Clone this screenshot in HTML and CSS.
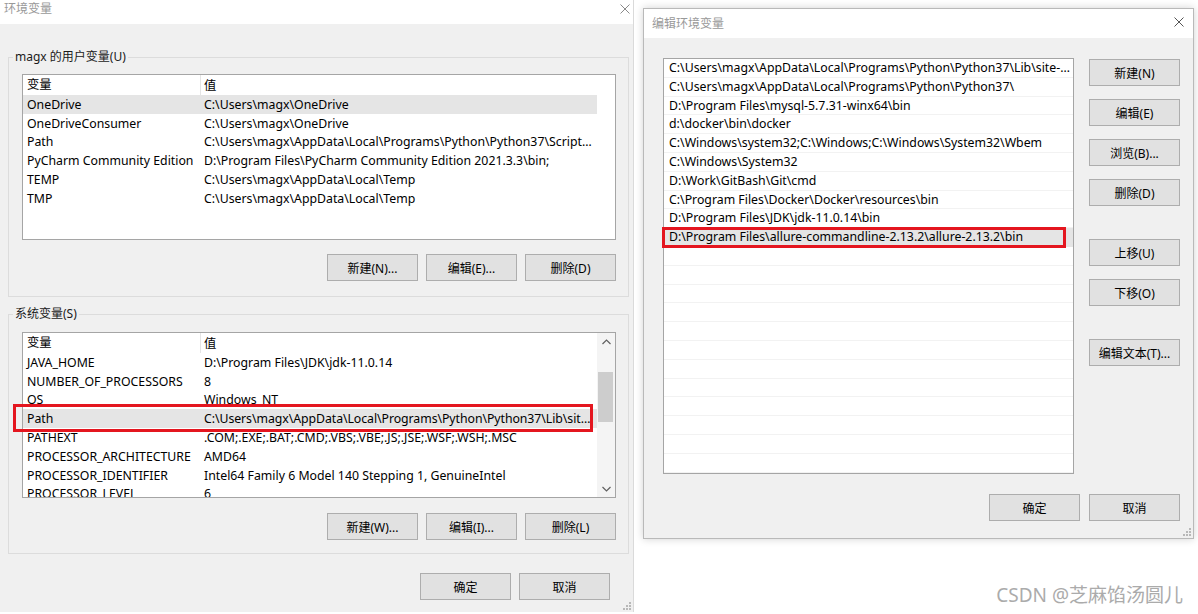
FILE: index.html
```html
<!DOCTYPE html>
<html lang="zh-CN">
<head>
<meta charset="utf-8">
<title>环境变量</title>
<link rel="stylesheet" href="styles.css">
</head>
<body>
<div class="screen">
  <section class="dlg env">
    <header class="titlebar">
      <span class="title">环境变量</span>
      <svg class="close" width="10" height="10" viewBox="0 0 10 10"><path d="M0.5 0.5 L9.5 9.5 M9.5 0.5 L0.5 9.5" stroke="#8a8a8a" stroke-width="1" fill="none"/></svg>
    </header>

    <fieldset class="group user">
      <legend>magx 的用户变量(U)</legend>
      <div class="lv-wrap">
        <div class="listview">
          <div class="lv-main">
            <div class="lv-head"><span class="c1">变量</span><span class="c2">值</span></div>
            <div class="lv-row sel"><span class="c1">OneDrive</span><span class="c2">C:\Users\magx\OneDrive</span></div>
            <div class="lv-row"><span class="c1">OneDriveConsumer</span><span class="c2">C:\Users\magx\OneDrive</span></div>
            <div class="lv-row"><span class="c1">Path</span><span class="c2">C:\Users\magx\AppData\Local\Programs\Python\Python37\Script…</span></div>
            <div class="lv-row"><span class="c1">PyCharm Community Edition</span><span class="c2">D:\Program Files\PyCharm Community Edition 2021.3.3\bin;</span></div>
            <div class="lv-row"><span class="c1">TEMP</span><span class="c2">C:\Users\magx\AppData\Local\Temp</span></div>
            <div class="lv-row"><span class="c1">TMP</span><span class="c2">C:\Users\magx\AppData\Local\Temp</span></div>
          </div>
        </div>
      </div>
      <div class="btnrow">
        <button class="btn">新建(N)...</button>
        <button class="btn">编辑(E)...</button>
        <button class="btn">删除(D)</button>
      </div>
    </fieldset>

    <fieldset class="group sys">
      <legend>系统变量(S)</legend>
      <div class="lv-wrap">
        <div class="listview">
          <div class="lv-main">
            <div class="lv-head"><span class="c1">变量</span><span class="c2">值</span></div>
            <div class="lv-row"><span class="c1">JAVA_HOME</span><span class="c2">D:\Program Files\JDK\jdk-11.0.14</span></div>
            <div class="lv-row"><span class="c1">NUMBER_OF_PROCESSORS</span><span class="c2">8</span></div>
            <div class="lv-row"><span class="c1">OS</span><span class="c2">Windows_NT</span></div>
            <div class="lv-row sel"><span class="c1">Path</span><span class="c2 tight">C:\Users\magx\AppData\Local\Programs\Python\Python37\Lib\sit…</span></div>
            <div class="lv-row"><span class="c1">PATHEXT</span><span class="c2">.COM;.EXE;.BAT;.CMD;.VBS;.VBE;.JS;.JSE;.WSF;.WSH;.MSC</span></div>
            <div class="lv-row"><span class="c1">PROCESSOR_ARCHITECTURE</span><span class="c2">AMD64</span></div>
            <div class="lv-row"><span class="c1">PROCESSOR_IDENTIFIER</span><span class="c2">Intel64 Family 6 Model 140 Stepping 1, GenuineIntel</span></div>
            <div class="lv-row"><span class="c1">PROCESSOR_LEVEL</span><span class="c2">6</span></div>
          </div>
          <div class="scrollbar">
            <div class="sb-arrow"><svg width="9" height="6" viewBox="0 0 9 6"><path d="M0.5 5 L4.5 1 L8.5 5" stroke="#606060" stroke-width="1.2" fill="none"/></svg></div>
            <div class="sb-thumb"></div>
            <div class="sb-arrow down"><svg width="9" height="6" viewBox="0 0 9 6"><path d="M0.5 1 L4.5 5 L8.5 1" stroke="#606060" stroke-width="1.2" fill="none"/></svg></div>
          </div>
        </div>
        <div class="redbox sys-mark"></div>
      </div>
      <div class="btnrow">
        <button class="btn">新建(W)...</button>
        <button class="btn">编辑(I)...</button>
        <button class="btn">删除(L)</button>
      </div>
    </fieldset>

    <div class="btnrow footer">
      <button class="btn">确定</button>
      <button class="btn">取消</button>
    </div>
    <svg class="grip" width="8" height="8" viewBox="0 0 8 8"><g fill="#b8b8b8"><rect x="6" y="0" width="2" height="2"/><rect x="3" y="3" width="2" height="2"/><rect x="6" y="3" width="2" height="2"/><rect x="0" y="6" width="2" height="2"/><rect x="3" y="6" width="2" height="2"/><rect x="6" y="6" width="2" height="2"/></g></svg>
  </section>

  <div class="right-col">
    <section class="dlg edit">
      <header class="titlebar">
        <span class="title">编辑环境变量</span>
        <svg class="close" width="10" height="10" viewBox="0 0 10 10"><path d="M0.5 0.5 L9.5 9.5 M9.5 0.5 L0.5 9.5" stroke="#555" stroke-width="1" fill="none"/></svg>
      </header>
      <div class="edit-body">
        <div class="edit-main">
          <div class="lv-wrap">
            <div class="pathlist">
              <div class="p-row">C:\Users\magx\AppData\Local\Programs\Python\Python37\Lib\site-…</div>
              <div class="p-row">C:\Users\magx\AppData\Local\Programs\Python\Python37\</div>
              <div class="p-row">D:\Program Files\mysql-5.7.31-winx64\bin</div>
              <div class="p-row">d:\docker\bin\docker</div>
              <div class="p-row">C:\Windows\system32;C:\Windows;C:\Windows\System32\Wbem</div>
              <div class="p-row">C:\Windows\System32</div>
              <div class="p-row">D:\Work\GitBash\Git\cmd</div>
              <div class="p-row">C:\Program Files\Docker\Docker\resources\bin</div>
              <div class="p-row">D:\Program Files\JDK\jdk-11.0.14\bin</div>
              <div class="p-row sel">D:\Program Files\allure-commandline-2.13.2\allure-2.13.2\bin</div>
            </div>
            <div class="redbox edit-mark"></div>
          </div>
          <div class="side-btns">
            <button class="btn">新建(N)</button>
            <button class="btn">编辑(E)</button>
            <button class="btn">浏览(B)...</button>
            <button class="btn">删除(D)</button>
            <button class="btn sep">上移(U)</button>
            <button class="btn">下移(O)</button>
            <button class="btn sep">编辑文本(T)...</button>
          </div>
        </div>
        <div class="btnrow footer">
          <button class="btn">确定</button>
          <button class="btn">取消</button>
        </div>
      </div>
      <svg class="grip" width="8" height="8" viewBox="0 0 8 8"><g fill="#b8b8b8"><rect x="6" y="0" width="2" height="2"/><rect x="3" y="3" width="2" height="2"/><rect x="6" y="3" width="2" height="2"/><rect x="0" y="6" width="2" height="2"/><rect x="3" y="6" width="2" height="2"/><rect x="6" y="6" width="2" height="2"/></g></svg>
    </section>
    <div class="watermark">CSDN @芝麻馅汤圆儿</div>
  </div>
</div>
</body>
</html>
```

FILE: styles.css
```css
* { box-sizing: border-box; }
html, body { margin: 0; padding: 0; }
body {
  background: #fff;
  font-family: "Noto Sans", "Noto Sans CJK SC", sans-serif;
  font-size: 12px;
  color: #000;
}
.screen {
  display: flex;
  align-items: flex-start;
  width: 1198px;
  height: 614px;
  overflow: hidden;
}
.dlg { position: relative; background: #f0f0f0; flex: none; }

/* title bars */
.titlebar {
  display: flex;
  justify-content: space-between;
  align-items: flex-start;
  background: #fff;
}
.title { font-size: 12px; line-height: 16px; color: #999; }
.close { display: block; flex: none; }

/* left dialog */
.env {
  width: 634px;
  height: 612px;
  border-right: 1px solid #dadada;
}
.env .titlebar { height: 24px; padding: 1px 0 0 4px; }
.env .close { margin: 3px 3px 0 0; }

.group {
  margin: 0 0 0 8px;
  width: 621px;
  min-width: 0;
  border: 1px solid #dcdcdc;
  padding: 9px 12px 14px 13px;
}
.group legend {
  padding: 0 2px;
  margin-left: -9px;
  line-height: 16px;
  font-size: 12px;
  color: #1a1a1a;
}
.group.user { margin-top: 25px; padding-bottom: 15px; }
.group.sys { margin-top: 9px; padding-top: 10px; padding-bottom: 13px; }

.lv-wrap { position: relative; }
.listview {
  width: 594px;
  height: 166px;
  border: 1px solid #a5a5a5;
  background: #fff;
  display: flex;
  overflow: hidden;
  font-size: 12.3px;
}
.lv-main { width: 574px; flex: none; }
.lv-head, .lv-row { display: flex; white-space: nowrap; }
.lv-head { height: 20px; align-items: center; }
.lv-head .c1 { width: 178px; border-right: 1px solid #e5e5e5; line-height: 20px; }
.lv-head .c2 { padding-left: 3px; }
.c1 { width: 177px; flex: none; padding-left: 4px; overflow: hidden; }
.c2 { flex: 1; padding-left: 4px; overflow: hidden; }
.c2.tight { letter-spacing: -0.06px; }
.lv-row { height: 18.8px; align-items: center; line-height: 16px; padding-top: 1px; }
.lv-row.sel { background: #e5e5e5; }

.scrollbar {
  flex: 1;
  display: flex;
  flex-direction: column;
  background: #f4f4f4;
}
.sb-arrow { height: 17px; display: flex; align-items: center; justify-content: center; }
.sb-arrow svg { display: block; }
.sb-arrow.down { margin-top: auto; }
.sb-thumb { margin: 22px 2px 0 1px; height: 50px; background: #cdcdcd; }

.redbox { position: absolute; border: 3px solid #e4161f; }
.sys-mark { left: -9px; top: 72px; width: 580px; height: 28px; }

.btnrow { display: flex; justify-content: flex-end; gap: 8px; margin-top: 14px; }
.group.sys .btnrow { margin-top: 15px; }
.btn {
  width: 91px;
  height: 27px;
  padding: 0;
  border: 1px solid #adadad;
  background: #e1e1e1;
  font-family: inherit;
  font-size: 12px;
  color: #000;
}
.env > .footer { margin-top: 19px; padding-right: 23px; }

.grip { position: absolute; right: 2px; bottom: 2px; }

/* right dialog */
.right-col {
  display: flex;
  flex-direction: column;
  margin: 8px 0 0 9px;
  width: 555px;
}
.edit {
  width: 551px;
  height: 531px;
  border: 1px solid #b9b9b9;
  box-shadow: 0 0 8px rgba(0, 0, 0, 0.18);
}
.edit .titlebar { height: 29px; padding: 7px 0 0 8px; }
.edit .close { margin: 1px 9px 0 0; }
.edit-body { padding: 20px 13px 0 19px; }
.edit-main { display: flex; }
.pathlist {
  width: 411px;
  height: 416px;
  border: 1px solid #a5a5a5;
  background: repeating-linear-gradient(to bottom, #fff 0, #fff 17.8px, #f2f2f2 17.8px, #f2f2f2 18.8px);
  overflow: hidden;
  font-size: 12.3px;
}
.p-row { height: 18.8px; line-height: 18px; padding-left: 5px; white-space: nowrap; }
.p-row.sel { background: #e5e5e5; }
.edit-mark { left: -1px; top: 169px; width: 404px; height: 21px; }

.side-btns {
  display: flex;
  flex-direction: column;
  gap: 13px;
  margin: 1px 0 0 15px;
}
.side-btns .sep { margin-top: 20px; }
.edit-body .footer { margin-top: 20px; gap: 9px; }

.watermark {
  align-self: flex-end;
  margin: 45px 15px 0 0;
  font-size: 19px;
  line-height: 22px;
  color: #ababab;
}
```
